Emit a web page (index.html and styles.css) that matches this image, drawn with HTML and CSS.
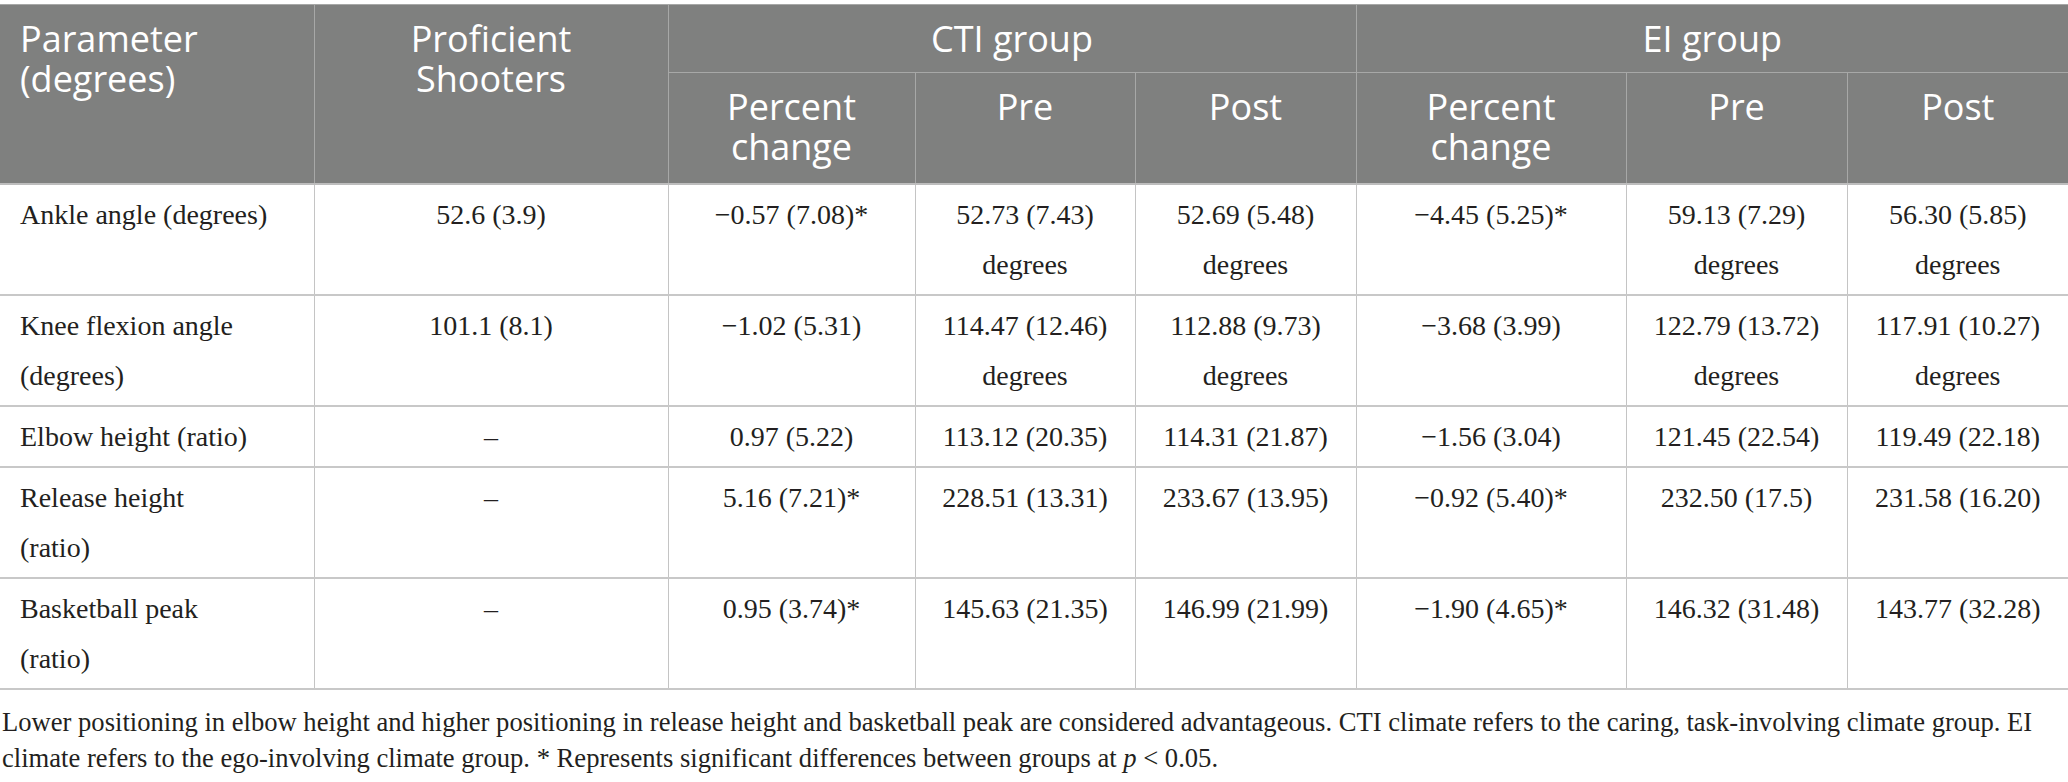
FILE: index.html
```html
<!DOCTYPE html>
<html lang="en">
<head>
<meta charset="utf-8">
<title>Table</title>
<link rel="stylesheet" href="styles.css">
</head>
<body>
<div class="page">
  <table class="data">
    <colgroup>
      <col class="c-param">
      <col class="c-prof">
      <col class="c-pct1">
      <col class="c-pre1">
      <col class="c-post1">
      <col class="c-pct2">
      <col class="c-pre2">
      <col class="c-post2">
    </colgroup>
    <thead>
      <tr class="head-top">
        <th rowspan="2" class="left">Parameter<br>(degrees)</th>
        <th rowspan="2">Proficient<br>Shooters</th>
        <th colspan="3">CTI group</th>
        <th colspan="3">EI group</th>
      </tr>
      <tr class="head-sub">
        <th>Percent<br>change</th>
        <th>Pre</th>
        <th>Post</th>
        <th>Percent<br>change</th>
        <th>Pre</th>
        <th>Post</th>
      </tr>
    </thead>
    <tbody>
      <tr>
        <td class="left">Ankle angle (degrees)</td>
        <td>52.6 (3.9)</td>
        <td>&minus;0.57 (7.08)*</td>
        <td>52.73 (7.43)<br>degrees</td>
        <td>52.69 (5.48)<br>degrees</td>
        <td>&minus;4.45 (5.25)*</td>
        <td>59.13 (7.29)<br>degrees</td>
        <td>56.30 (5.85)<br>degrees</td>
      </tr>
      <tr>
        <td class="left">Knee flexion angle<br>(degrees)</td>
        <td>101.1 (8.1)</td>
        <td>&minus;1.02 (5.31)</td>
        <td>114.47 (12.46)<br>degrees</td>
        <td>112.88 (9.73)<br>degrees</td>
        <td>&minus;3.68 (3.99)</td>
        <td>122.79 (13.72)<br>degrees</td>
        <td>117.91 (10.27)<br>degrees</td>
      </tr>
      <tr class="single">
        <td class="left">Elbow height (ratio)</td>
        <td>&ndash;</td>
        <td>0.97 (5.22)</td>
        <td>113.12 (20.35)</td>
        <td>114.31 (21.87)</td>
        <td>&minus;1.56 (3.04)</td>
        <td>121.45 (22.54)</td>
        <td>119.49 (22.18)</td>
      </tr>
      <tr>
        <td class="left">Release height<br>(ratio)</td>
        <td>&ndash;</td>
        <td>5.16 (7.21)*</td>
        <td>228.51 (13.31)</td>
        <td>233.67 (13.95)</td>
        <td>&minus;0.92 (5.40)*</td>
        <td>232.50 (17.5)</td>
        <td>231.58 (16.20)</td>
      </tr>
      <tr>
        <td class="left">Basketball peak<br>(ratio)</td>
        <td>&ndash;</td>
        <td>0.95 (3.74)*</td>
        <td>145.63 (21.35)</td>
        <td>146.99 (21.99)</td>
        <td>&minus;1.90 (4.65)*</td>
        <td>146.32 (31.48)</td>
        <td>143.77 (32.28)</td>
      </tr>
    </tbody>
  </table>
  <p class="note">Lower positioning in elbow height and higher positioning in release height and basketball peak are considered advantageous. CTI climate refers to the caring, task-involving climate group. EI climate refers to the ego-involving climate group. * Represents significant differences between groups at <i>p</i> &lt; 0.05.</p>
</div>
</body>
</html>
```

FILE: styles.css
```css
html, body {
  margin: 0;
  padding: 0;
  background: #ffffff;
}

.page {
  padding-top: 4px;
  width: 2068px;
}

.data {
  width: 2068px;
  table-layout: fixed;
  border-collapse: collapse;
  border-top: 1px solid #c6c6c6;
}

.c-param { width: 314px; }
.c-prof { width: 354px; }
.c-pct1 { width: 247px; }
.c-pre1 { width: 220px; }
.c-post1 { width: 221px; }
.c-pct2 { width: 270px; }
.c-pre2 { width: 221px; }
.c-post2 { width: 221px; }

.data th {
  background: #7f807f;
  color: #ffffff;
  font-family: "Open Sans", "Noto Sans", sans-serif;
  font-weight: 400;
  font-size: 36px;
  line-height: 40px;
  text-align: center;
  vertical-align: top;
  padding: 14px 20px 13px;
  border: 1px solid #a7a8a7;
}

.head-sub th {
  padding-bottom: 16px;
}

.data th.left,
.data td.left {
  text-align: left;
}

.data thead tr:last-child th,
.data thead th[rowspan] {
  border-bottom: 2px solid #bdbdbd;
}

.data td {
  font-family: "Liberation Serif", "Times New Roman", serif;
  font-size: 28px;
  line-height: 50px;
  color: #231f20;
  text-align: center;
  vertical-align: top;
  padding: 5px 20px 4px;
  border-left: 1px solid #c4c4c4;
  border-right: 1px solid #c4c4c4;
  border-bottom: 2px solid #c8c8c8;
}

.data tr > :first-child {
  border-left: none;
}

.data tr > :last-child {
  border-right: none;
}

.note {
  margin: 14px 0 0 2px;
  font-family: "Liberation Serif", "Times New Roman", serif;
  font-size: 26.6px;
  line-height: 36px;
  color: #231f20;
}
```
